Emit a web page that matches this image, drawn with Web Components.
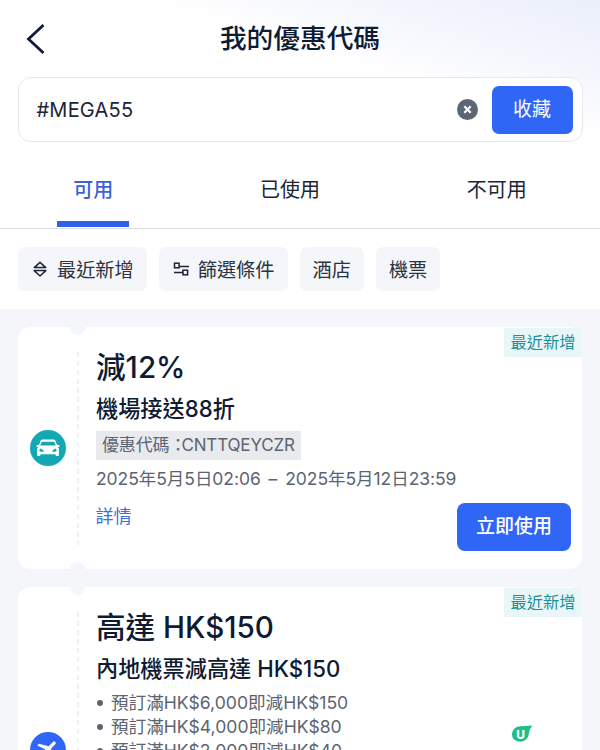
<!DOCTYPE html>
<html lang="zh-Hant">
<head>
<meta charset="utf-8">
<title>我的優惠代碼</title>
<style>
html,body{margin:0;padding:0;height:750px;overflow:hidden;background:#fff}
body{font-family:Inter,"Noto Sans CJK TC",sans-serif;color:#0f1b33}
</style>
</head>
<body>
<coupon-app>
  <top-panel>
    <app-header>我的優惠代碼</app-header>
    <search-box value="#MEGA55" action="收藏"></search-box>
  </top-panel>
  <tab-bar>
    <tab-item active>可用</tab-item>
    <tab-item>已使用</tab-item>
    <tab-item>不可用</tab-item>
  </tab-bar>
  <chip-row>
    <filter-chip icon="sort">最近新增</filter-chip>
    <filter-chip icon="filter">篩選條件</filter-chip>
    <filter-chip>酒店</filter-chip>
    <filter-chip>機票</filter-chip>
  </chip-row>
  <coupon-list>
    <coupon-card kind="car" tag="最近新增">
      <span slot="title">減12%</span>
      <span slot="subtitle">機場接送88折</span>
      <coupon-code>優惠代碼<span style="letter-spacing:-5px">：</span>CNTTQEYCZR</coupon-code>
      <coupon-dates>2025年5月5日02:06<span style="margin:0 3px"> – </span>2025年5月12日23:59</coupon-dates>
      <coupon-footer action="立即使用">詳情</coupon-footer>
    </coupon-card>
    <coupon-card kind="plane" tag="最近新增" style="min-height:325px">
      <span slot="title">高達 HK$150</span>
      <span slot="subtitle">內地機票減高達 HK$150</span>
      <coupon-rule>預訂滿HK$6,000即減HK$150</coupon-rule>
      <coupon-rule>預訂滿HK$4,000即減HK$80</coupon-rule>
      <coupon-rule>預訂滿HK$2,000即減HK$40</coupon-rule>
    </coupon-card>
  </coupon-list>
  <water-mark></water-mark>
</coupon-app>
<script>
const FONT = 'Inter,"Noto Sans CJK TC",sans-serif';
function def(name, css, html){
  customElements.define(name, class extends HTMLElement{
    constructor(){
      super();
      this.attachShadow({mode:'open'});
      if(typeof html!=='function') this.shadowRoot.innerHTML = '<style>'+css+'</style>'+html;
    }
    connectedCallback(){
      if(typeof html==='function') this.shadowRoot.innerHTML = '<style>'+css+'</style>'+html(this);
    }
  });
}
def('coupon-app',
 ':host{display:block;position:relative;width:600px;height:750px;overflow:hidden;background:#fff;font-family:'+FONT+'}',
 '<slot></slot>');
def('top-panel',
 ':host{display:block;height:142px;background:linear-gradient(197deg,#ebeffb 0,#f4f6fd 70px,#fff 135px)}',
 '<slot></slot>');
def('app-header',
 ':host{display:grid;grid-template-columns:1fr auto 1fr;align-items:center;height:77px;box-sizing:border-box}'+
 '.t{font-size:26.7px;font-weight:500;color:#0f1b33;line-height:77px}'+
 'svg{display:block;margin-left:24px}',
 '<svg width="24" height="34" viewBox="0 0 24 34"><path d="M19.500 3 L4.500 17 L19.500 31" fill="none" stroke="#0f1b33" stroke-width="2.800"/></svg><div class="t"><slot></slot></div><div></div>');
def('search-box',
 ':host{display:flex;align-items:center;margin:0 17.5px;height:65px;box-sizing:border-box;border:1.5px solid #e6e8ec;border-radius:13px;background:#fff;padding:0 9px 0 18px}'+
 '.v{flex:1;font-size:20px;color:#1b2537;letter-spacing:.2px}'+
 'svg{display:block;margin-right:14px}'+
 'button{all:unset;box-sizing:border-box;width:81px;height:48px;border-radius:7px;background:#2f66f6;color:#fff;font-size:19px;text-align:center;line-height:48px}',
 h=>'<div class="v">'+h.getAttribute('value')+'</div><svg width="21" height="21" viewBox="0 0 21 21"><circle cx="10.500" cy="10.500" r="10.500" fill="#5d6675"/><path d="M7.300 7.300l6.400 6.400M13.700 7.300l-6.400 6.400" stroke="#fff" stroke-width="2.200"/></svg><button>'+h.getAttribute('action')+'</button>');
def('tab-bar',
 ':host{display:flex;justify-content:space-around;align-items:flex-end;height:87px;box-sizing:border-box;border-bottom:1px solid #dcdee2;padding-bottom:1px}',
 '<slot></slot>');
def('tab-item',
 ':host{display:block;box-sizing:border-box;height:85px;padding:33px 16px 0;font-size:20px;line-height:30px;color:#1b2537;border-bottom:6px solid transparent}'+
 ':host([active]){color:#3b63d8;font-weight:500;border-bottom-color:#2f62e6}',
 '<slot></slot>');
def('chip-row',
 ':host{display:flex;gap:12px;padding:18px 18px;height:44px}',
 '<slot></slot>');
const ICONS = {
 sort:'<svg width="16" height="16" viewBox="0 0 16 16" style="overflow:visible"><path d="M3.200 6.600 9 1.400l5.800 5.200z" fill="none" stroke="#1b2537" stroke-width="1.500" stroke-linejoin="round"/><path d="M3.200 9.600h11.600L9 15z" fill="none" stroke="#1b2537" stroke-width="1.500" stroke-linejoin="round"/></svg>',
 filter:'<svg width="16" height="16" viewBox="0 0 16 16" fill="none" stroke="#1b2537" stroke-width="1.500" style="overflow:visible"><rect x="2.500" y="2.200" width="4.600" height="4.600"/><path d="M7.100 5.400H17M2 11.400h9"/><rect x="11" y="9.200" width="4.600" height="4.600"/></svg>'
};
def('filter-chip',
 ':host{display:flex;align-items:center;gap:10px;height:44px;box-sizing:border-box;padding:0 13px;background:#f5f6f9;border-radius:7px;font-size:19.2px;color:#2a3342}'+
 'svg{display:block;flex:none}',
 h=>(ICONS[h.getAttribute('icon')]||'')+'<span><slot></slot></span>');
def('coupon-list',
 ':host{display:flex;flex-direction:column;gap:18px;padding:18px 18px 0;background:#f4f6fa;height:441px}',
 '<slot></slot>');
const KIND = {
 car:{c:'#12a8b3',p:'<svg width="26" height="26" viewBox="0 0 26 26"><path fill="#fff" fill-rule="evenodd" d="M7.600 4.500h10.800c1 0 1.800.6 2.100 1.400l1.600 4.100h1.700c.4 0 .7.3.7.7v.6c0 .4-.3.7-.7.7h-.9c.6.6 1 1.400 1 2.300V21h-3.200v-1.700H5.300V21H2.100v-6.700c0-.9.4-1.700 1-2.300h-.9c-.4 0-.7-.3-.7-.7v-.6c0-.4.3-.7.7-.7h1.700l1.600-4.100c.3-.8 1.100-1.400 2.100-1.400zM6.700 6.700 5.300 10.500h15.400l-1.400-3.800zM6 13.600a1.600 1.600 0 1 0 0 3.200h2.600v-1zM20 13.600l-2.600 2.200v1H20a1.600 1.600 0 1 0 0-3.200z"/></svg>'},
 plane:{c:'#2f66f6',p:'<svg width="26" height="26" viewBox="0 0 24 24" style="transform:rotate(45deg)"><path fill="#fff" d="M21 16v-2l-8-5V3.500c0-.83-.67-1.500-1.500-1.500S10 2.670 10 3.500V9l-8 5v2l8-2.500V19l-2 1.500V22l3.500-1 3.500 1v-1.500L13 19v-5.500l8 2.500z"/></svg>'}
};
def('coupon-card',
 ':host{display:flex;position:relative;flex:none;background:#fff;border-radius:12px;box-sizing:border-box;width:564px}'+
 '.side{flex:none;width:59px;display:flex;align-items:center;justify-content:center}'+
 '.ic{width:36px;height:36px;border-radius:50%;display:flex;align-items:center;justify-content:center;margin-left:1px}'+
 '.line{flex:none;width:2px;margin:25px 0 24px;background:repeating-linear-gradient(#eef0f4 0 5px,transparent 5px 9px)}'+
 '.body{flex:1;min-width:0;padding:22px 11px 18px 17px}'+
 '.title{font-size:29.6px;font-weight:500;line-height:36px;color:#0f1b33}'+
 '.sub{font-size:22.2px;font-weight:500;line-height:30px;margin-top:9px;color:#0f1b33}'+
 '.notch{position:absolute;left:52px;width:15px;height:7.500px;background:#f4f6fa}'+
 '.n1{top:0;border-radius:0 0 8px 8px}.n2{bottom:0;border-radius:8px 8px 0 0}'+
 '.tag{position:absolute;top:1px;right:0;width:78px;height:29px;background:#e8f6f8;color:#1f8f9b;font-size:16.250px;line-height:29px;text-align:center}',
 h=>{const k=KIND[h.getAttribute('kind')];return '<div class="side"><div class="ic" style="background:'+k.c+'">'+k.p+'</div></div><div class="line"></div><div class="body"><div class="title"><slot name="title"></slot></div><div class="sub"><slot name="subtitle"></slot></div><slot></slot></div><i class="notch n1"></i><i class="notch n2"></i><div class="tag">'+h.getAttribute('tag')+'</div>';});
def('coupon-code',
 ':host{display:block;width:max-content;margin-top:7px;height:29px;line-height:29px;padding:0 6px;background:#e8eaed;color:#5c6470;font-size:17px;letter-spacing:-.15px}',
 '<slot></slot>');
def('coupon-dates',
 ':host{display:block;margin-top:7px;line-height:24px;font-size:17.500px;letter-spacing:-.05px;color:#5c6470;white-space:nowrap}',
 '<slot></slot>');
def('coupon-footer',
 ':host{display:flex;justify-content:space-between;align-items:flex-start;margin-top:12px;height:48px}'+
 '.d{font-size:18px;line-height:28px;color:#3f6fdc;margin-left:-.5px}'+
 'button{all:unset;box-sizing:border-box;width:114px;height:48px;border-radius:8px;background:#2f66f6;color:#fff;font-size:19px;font-weight:500;line-height:48px;text-align:center}',
 h=>'<div class="d"><slot></slot></div><button>'+h.getAttribute('action')+'</button>');
def('coupon-rule',
 ':host{display:flex;align-items:center;font-size:17.600px;line-height:24px;color:#5c6470;white-space:nowrap}'+
 ':host(:first-of-type){margin-top:7px}'+
 'i{flex:none;width:6px;height:6px;border-radius:50%;background:#5c6470;margin:0 8px 0 1px}',
 '<i></i><span><slot></slot></span>');
def('water-mark',
 ':host{position:absolute;left:511px;top:725px;width:22px;height:18px}svg{display:block}text{font-family:Inter,sans-serif}',
 '<svg width="22" height="18" viewBox="0 0 22 18"><path d="M1 9.500C1 4.500 5 1.200 10 1.200L21.500 .5C19.500 3 18.500 5 18 8c-.6 5-4 8.700-8.500 8.700C4.800 16.700 1 14 1 9.500z" fill="#1dbf84"/><text x="9.700" y="14" font-size="12" font-weight="800" fill="#fff" text-anchor="middle">U</text></svg>');
</script>
</body>
</html>
